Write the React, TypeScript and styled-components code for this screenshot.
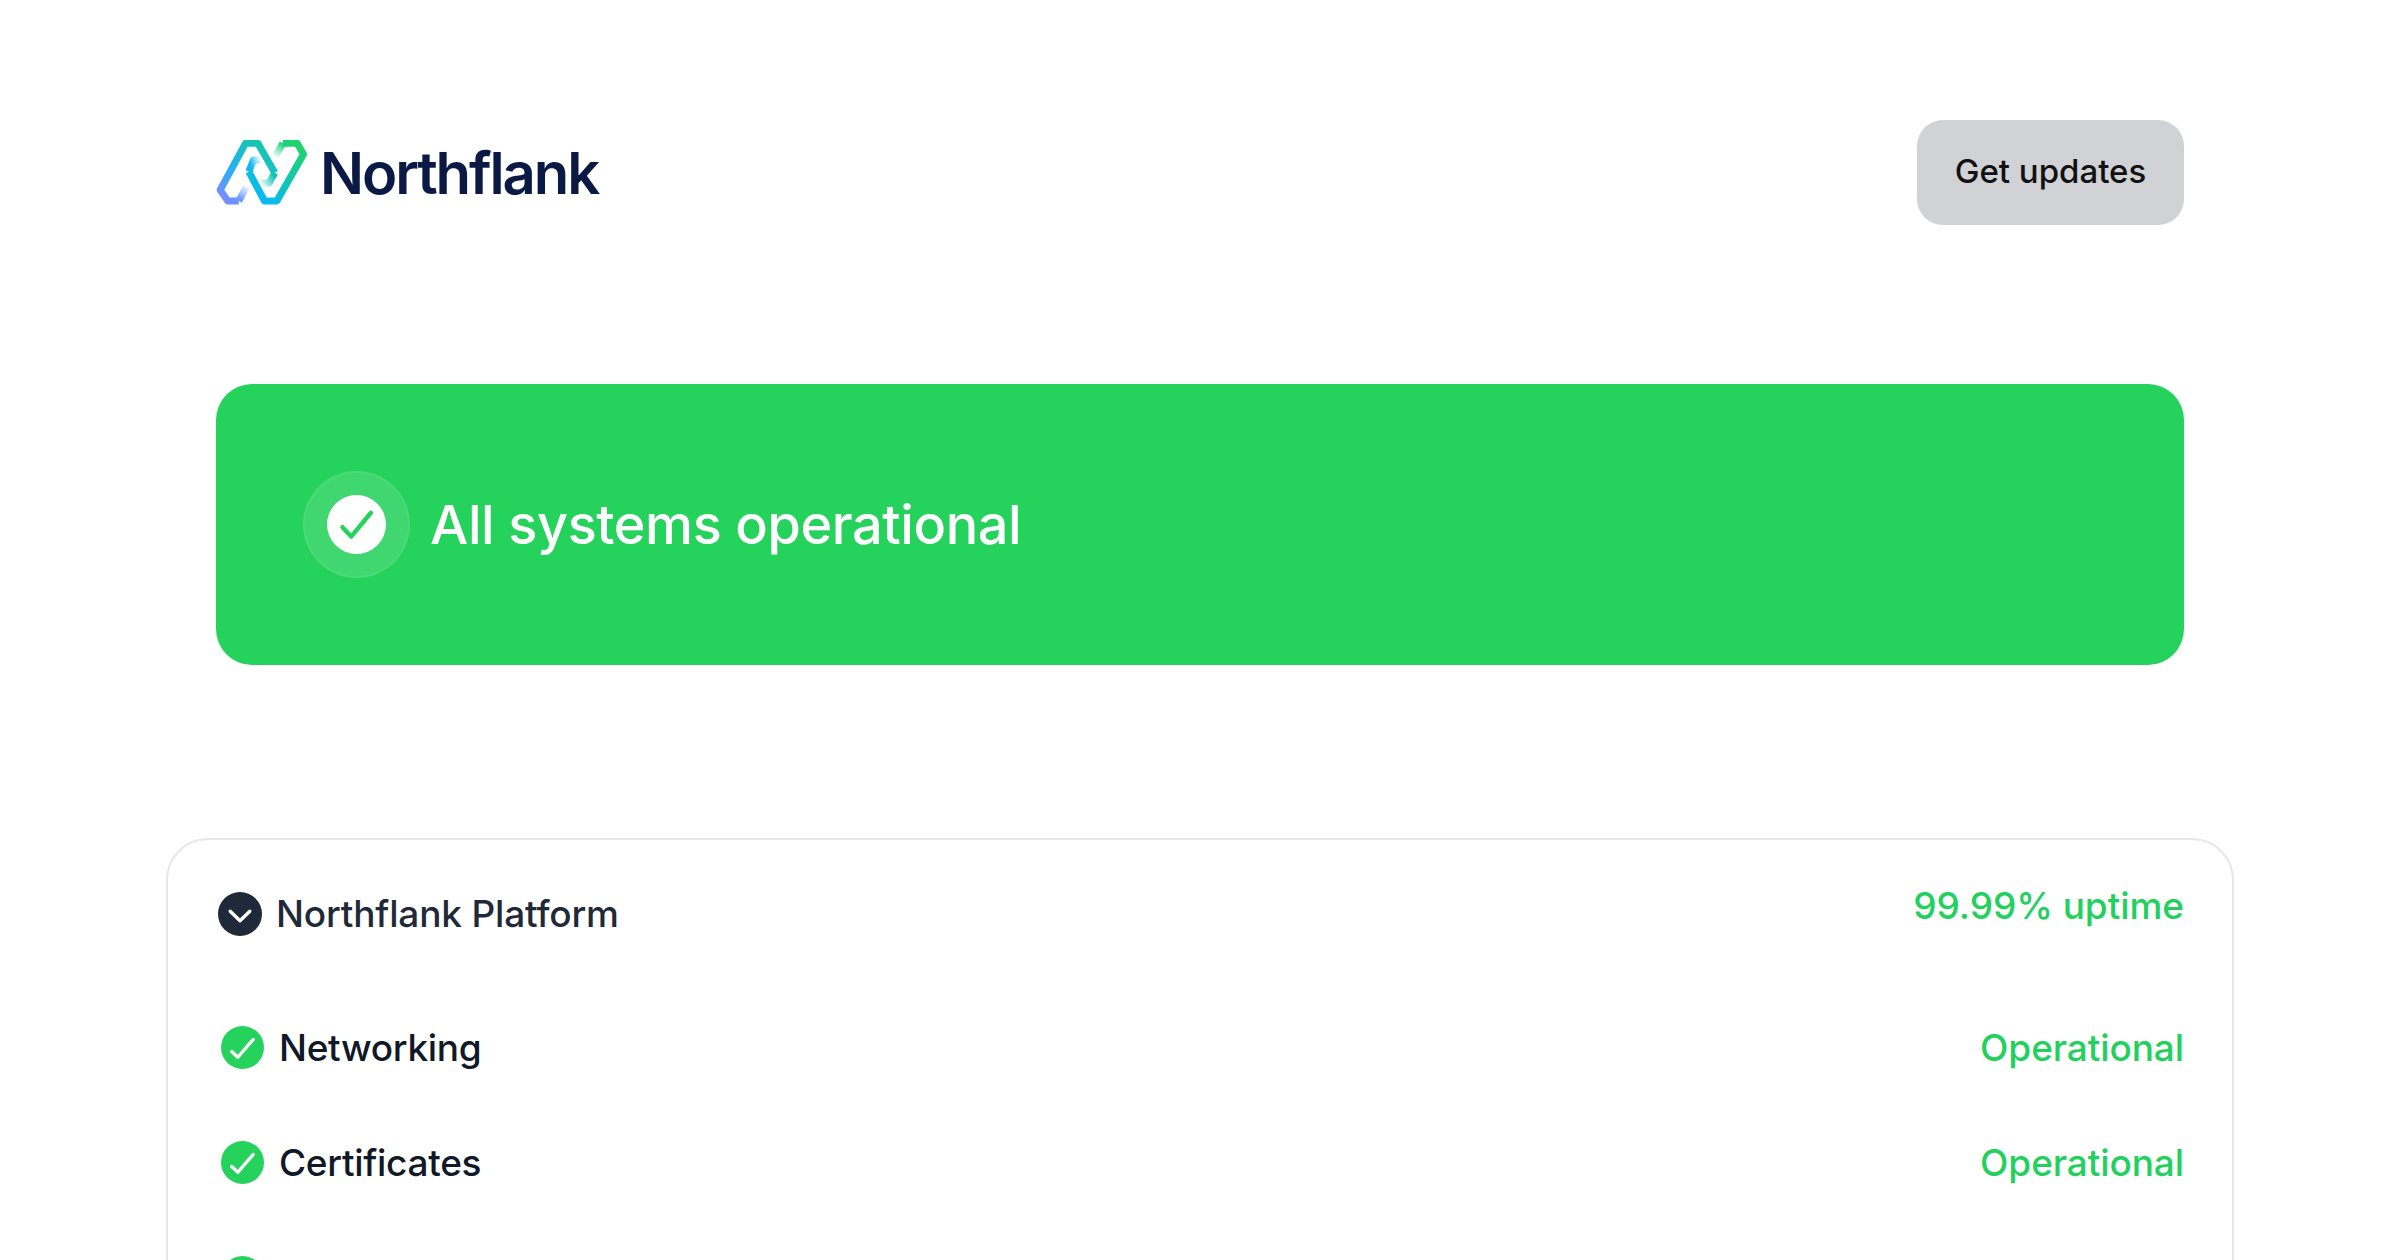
import React from "react";
import styled, { createGlobalStyle } from "styled-components";

const GlobalStyle = createGlobalStyle`
  html, body {
    margin: 0;
    height: 100%;
    overflow: hidden;
    background: #ffffff;
    font-family: "Inter", "Liberation Sans", sans-serif;
  }
`;

const Page = styled.div`
  padding: 120px 166px 0;
`;

const Header = styled.header`
  display: flex;
  align-items: center;
  justify-content: space-between;
  padding: 0 50px;
`;

const Brand = styled.a`
  display: flex;
  align-items: center;
  gap: 12px;
  text-decoration: none;
`;

const BrandName = styled.span`
  font-size: 58px;
  font-weight: 600;
  letter-spacing: -2.1px;
  line-height: 1;
  color: #0b1a45;
`;

const UpdatesButton = styled.button`
  width: 267px;
  height: 105px;
  padding: 0 0 3px;
  border: 0;
  border-radius: 26px;
  background: #d1d2d6;
  color: #111111;
  font-family: inherit;
  font-size: 33px;
  font-weight: 450;
`;

const Banner = styled.section`
  display: flex;
  align-items: center;
  gap: 20px;
  height: 281px;
  margin: 159px 50px 0;
  padding: 0 87px;
  border-radius: 36px;
  background: #24d25c;
  color: #ffffff;
`;

const BannerIcon = styled.div`
  display: flex;
  align-items: center;
  justify-content: center;
  box-sizing: border-box;
  width: 107px;
  height: 107px;
  border: 2px solid rgba(255, 255, 255, 0.06);
  border-radius: 50%;
  background: rgba(255, 255, 255, 0.13);
`;

const BannerTitle = styled.h1`
  margin: 0;
  font-size: 54px;
  font-weight: 500;
  letter-spacing: -0.4px;
`;

const Card = styled.section`
  margin-top: 173px;
  padding: 51px 48px 40px;
  border: 2px solid #e5e7eb;
  border-radius: 42px;
`;

const GroupHeader = styled.div`
  display: flex;
  justify-content: space-between;
  margin-bottom: 54px;
`;

const GroupName = styled.div`
  display: flex;
  align-items: center;
  gap: 14px;
  padding-left: 2px;
  font-size: 37px;
  font-weight: 450;
  letter-spacing: -0.17px;
  color: #1f2937;
`;

const Uptime = styled.span`
  margin-top: -8px;
  font-size: 37px;
  font-weight: 450;
  letter-spacing: -0.05px;
  color: #22d05e;
`;

const Row = styled.div`
  display: flex;
  align-items: center;
  justify-content: space-between;
  height: 115px;
  padding-left: 5px;
`;

const RowName = styled.div`
  display: flex;
  align-items: center;
  gap: 15px;
  font-size: 37px;
  font-weight: 450;
  letter-spacing: -0.3px;
  color: #111827;
`;

const RowStatus = styled.span`
  font-size: 37px;
  font-weight: 450;
  letter-spacing: -0.1px;
  color: #22d05e;
`;

const LogoMark = () => (
  <svg width="92" height="65" viewBox="50 60 275 195" fill="none">
    <defs>
      <linearGradient id="strandA" gradientUnits="userSpaceOnUse" x1="70" y1="240" x2="200" y2="70">
        <stop offset="0" stopColor="#7a8cff" />
        <stop offset="0.45" stopColor="#1fb4f0" />
        <stop offset="1" stopColor="#14c9a6" />
      </linearGradient>
      <linearGradient id="strandB" gradientUnits="userSpaceOnUse" x1="170" y1="240" x2="300" y2="80">
        <stop offset="0" stopColor="#05b8ff" />
        <stop offset="0.5" stopColor="#10c6b4" />
        <stop offset="1" stopColor="#20d46c" />
      </linearGradient>
      <linearGradient id="fadeBottom" gradientUnits="userSpaceOnUse" x1="120" y1="235" x2="142" y2="195">
        <stop offset="0" stopColor="#6f9cff" />
        <stop offset="1" stopColor="#6f9cff" stopOpacity="0" />
      </linearGradient>
      <linearGradient id="fadeMiddle" gradientUnits="userSpaceOnUse" x1="222" y1="165" x2="182" y2="192">
        <stop offset="0" stopColor="#12c4b4" />
        <stop offset="1" stopColor="#12c4b4" stopOpacity="0" />
      </linearGradient>
      <linearGradient id="fadeInner" gradientUnits="userSpaceOnUse" x1="152" y1="130" x2="185" y2="118">
        <stop offset="0" stopColor="#10b8f0" />
        <stop offset="1" stopColor="#10b8f0" stopOpacity="0" />
      </linearGradient>
      <linearGradient id="fadeTop" gradientUnits="userSpaceOnUse" x1="250" y1="72" x2="226" y2="112">
        <stop offset="0" stopColor="#20d47c" />
        <stop offset="1" stopColor="#20d47c" stopOpacity="0" />
      </linearGradient>
    </defs>
    <g strokeWidth="21" strokeLinejoin="round">
      <path d="M118 243H85L62 210L138 70H175L226 158" stroke="url(#strandA)" />
      <path d="M142 198L118 243" stroke="url(#fadeBottom)" />
      <path d="M226 158L208 190H182" stroke="url(#fadeMiddle)" />
      <path d="M148 155L195 243H232L312 103L293 70H250" stroke="url(#strandB)" />
      <path d="M148 155L162 120H186" stroke="url(#fadeInner)" />
      <path d="M250 70L226 112" stroke="url(#fadeTop)" />
    </g>
  </svg>
);

const BannerCheck = () => (
  <svg width="59" height="59" viewBox="0 0 176 176">
    <circle cx="88" cy="88" r="88" fill="#ffffff" />
    <path d="M46 96L72 124L131 53" fill="none" stroke="#24d25c" strokeWidth="13" strokeLinecap="round" strokeLinejoin="round" />
  </svg>
);

const ChevronIcon = () => (
  <svg width="44" height="44" viewBox="0 0 130 130">
    <circle cx="65" cy="65" r="65" fill="#1f2937" />
    <path d="M36 57L65 85L94 57" fill="none" stroke="#ffffff" strokeWidth="10" strokeLinecap="round" strokeLinejoin="round" />
  </svg>
);

const OkIcon = () => (
  <svg width="43" height="43" viewBox="0 0 128 128">
    <circle cx="64" cy="64" r="64" fill="#24d25c" />
    <path d="M32 76L50 93L96 40" fill="none" stroke="#ffffff" strokeWidth="10" strokeLinecap="round" strokeLinejoin="round" />
  </svg>
);

const services = ["Networking", "Certificates"];

export default function App() {
  return (
    <Page>
      <GlobalStyle />
      <Header>
        <Brand>
          <LogoMark />
          <BrandName>Northflank</BrandName>
        </Brand>
        <UpdatesButton>Get updates</UpdatesButton>
      </Header>

      <Banner>
        <BannerIcon>
          <BannerCheck />
        </BannerIcon>
        <BannerTitle>All systems operational</BannerTitle>
      </Banner>

      <Card>
        <GroupHeader>
          <GroupName>
            <ChevronIcon />
            Northflank Platform
          </GroupName>
          <Uptime>99.99% uptime</Uptime>
        </GroupHeader>
        {services.map((name) => (
          <Row key={name}>
            <RowName>
              <OkIcon />
              {name}
            </RowName>
            <RowStatus>Operational</RowStatus>
          </Row>
        ))}
        {/* next service row only peeks in at the bottom edge */}
        <Row>
          <RowName>
            <OkIcon />
          </RowName>
        </Row>
      </Card>
    </Page>
  );
}
